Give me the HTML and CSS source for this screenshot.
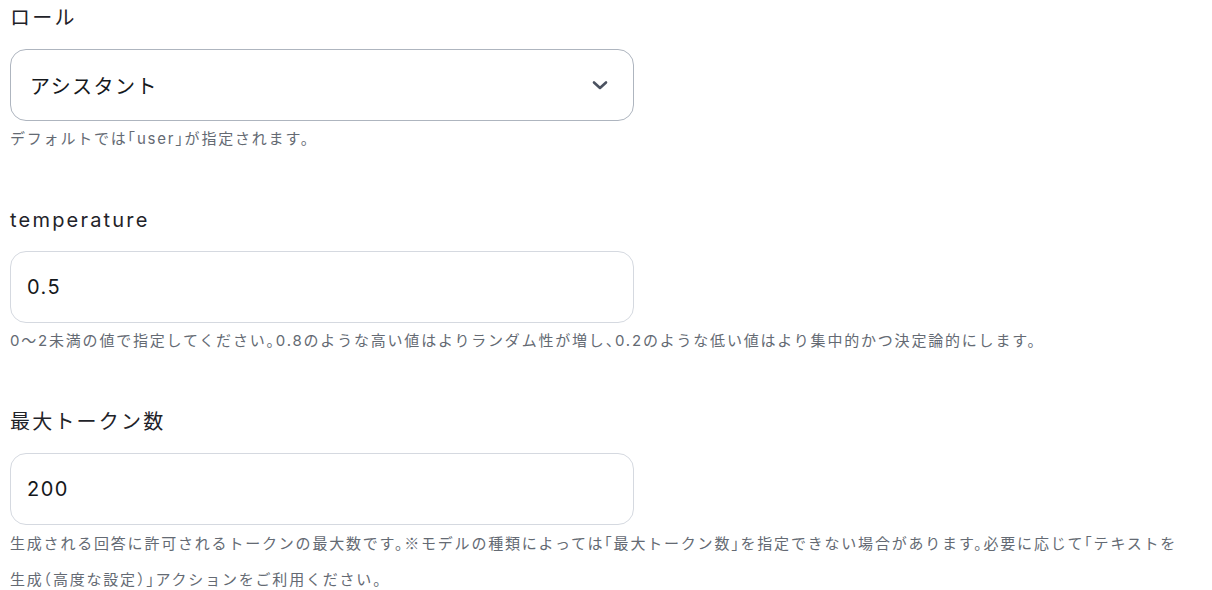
FILE: index.html
```html
<!DOCTYPE html>
<html lang="ja">
<head>
<meta charset="utf-8">
<link rel="stylesheet" href="styles.css">
</head>
<body>
<div class="form">
  <div class="field">
    <label class="label">ロール</label>
    <div class="control select">
      <span class="value">アシスタント</span>
      <svg class="chevron" viewBox="0 0 18 18" width="18" height="18"><path d="M3 6.5l6 5.5 6-5.5" fill="none" stroke="#4b5260" stroke-width="2.6" stroke-linecap="round" stroke-linejoin="round"/></svg>
    </div>
    <p class="help">デフォルトでは「user」が指定されます。</p>
  </div>
  <div class="field">
    <label class="label">temperature</label>
    <div class="control input"><span class="value">0.5</span></div>
    <p class="help">0〜2未満の値で指定してください。0.8のような高い値はよりランダム性が増し、0.2のような低い値はより集中的かつ決定論的にします。</p>
  </div>
  <div class="field">
    <label class="label">最大トークン数</label>
    <div class="control input"><span class="value">200</span></div>
    <p class="help">生成される回答に許可されるトークンの最大数です。<span class="cjk">※</span>モデルの種類によっては「最大トークン数」を指定できない場合があります。必要に応じて「テキストを生成（高度な設定）」アクションをご利用ください。</p>
  </div>
</div>
</body>
</html>
```
FILE: styles.css
```css
html, body {
  margin: 0;
  padding: 0;
  background: #ffffff;
}
body {
  font-family: "Inter", "Noto Sans CJK JP", sans-serif;
  color: #1f2329;
  letter-spacing: 0.09em;
}
.form {
  display: flex;
  flex-direction: column;
  gap: 45px;
  padding: 0 30px 0 10px;
}
.field {
  display: flex;
  flex-direction: column;
}
.label {
  display: block;
  font-size: 20px;
  line-height: 36px;
  font-weight: 400;
  letter-spacing: 2.2px;
  color: #1f2329;
  margin-bottom: 13px;
}
.control {
  box-sizing: border-box;
  width: 624px;
  height: 72px;
  border: 1px solid #d5d9e0;
  border-radius: 16px;
  display: flex;
  align-items: center;
  padding: 0 16px;
  background: #fff;
}
.select {
  border-color: #aeb5bf;
  justify-content: space-between;
  padding: 0 24px 0 19px;
}
.value {
  font-size: 20px;
  color: #15181c;
}
.chevron {
  display: block;
}
.help {
  margin: 0;
  font-size: 15px;
  line-height: 36px;
  letter-spacing: 1.8px;
  color: #646a73;
  font-feature-settings: "halt";
}
.cjk {
  font-family: "Noto Sans CJK JP", sans-serif;
}
```
